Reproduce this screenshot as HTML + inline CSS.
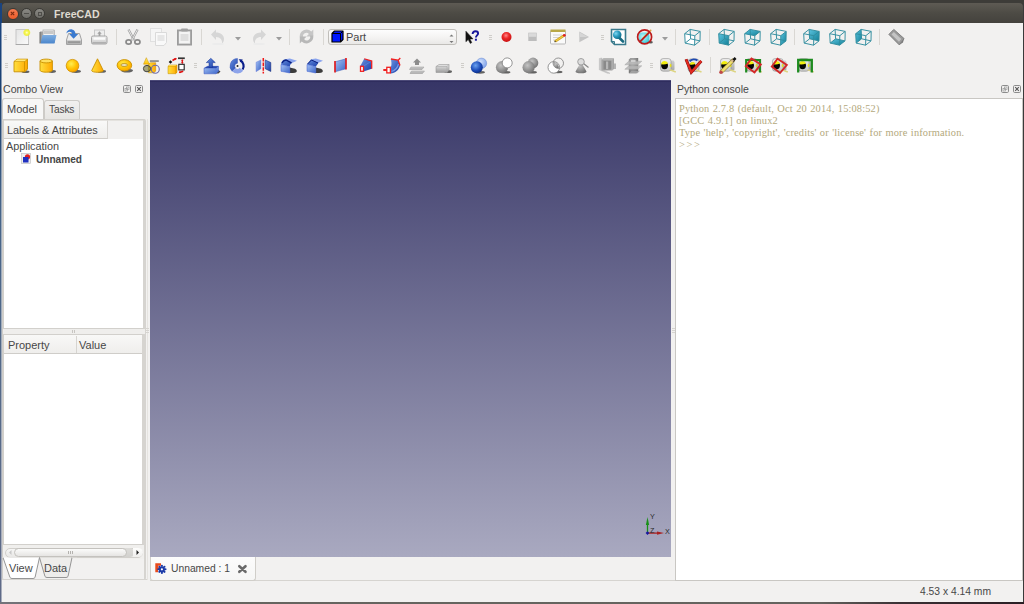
<!DOCTYPE html>
<html><head><meta charset="utf-8">
<style>
*{margin:0;padding:0;box-sizing:border-box}
html,body{width:1024px;height:604px;overflow:hidden;background:#3c3b37;font-family:"Liberation Sans",sans-serif;font-size:11px;color:#474747}
.a{position:absolute;display:block}
svg{overflow:visible}
.t{position:absolute;white-space:nowrap;line-height:1}
</style></head><body>

<svg width="0" height="0" style="position:absolute"><defs>
<linearGradient id="gPage" x1="0" y1="0" x2="1" y2="1"><stop offset="0" stop-color="#e4e4e4"/><stop offset="1" stop-color="#fafafa"/></linearGradient>
<radialGradient id="gGlow"><stop offset="0" stop-color="#ffffe0"/><stop offset="0.35" stop-color="#f8f85a"/><stop offset="0.7" stop-color="#eeee30" stop-opacity="0.9"/><stop offset="1" stop-color="#eeee30" stop-opacity="0"/></radialGradient>
<linearGradient id="gBlueF" x1="0" y1="0" x2="0" y2="1"><stop offset="0" stop-color="#80aee0"/><stop offset="1" stop-color="#4a86cc"/></linearGradient>
<linearGradient id="gGrayV" x1="0" y1="0" x2="0" y2="1"><stop offset="0" stop-color="#f0f0f0"/><stop offset="1" stop-color="#c8c8c8"/></linearGradient>
<linearGradient id="gGrayD" x1="0" y1="0" x2="0" y2="1"><stop offset="0" stop-color="#d0d0d0"/><stop offset="1" stop-color="#a8a8a8"/></linearGradient>
<radialGradient id="gRed" cx="0.45" cy="0.35" r="0.65"><stop offset="0" stop-color="#ff8a8a"/><stop offset="0.45" stop-color="#ec2a2a"/><stop offset="1" stop-color="#c81010"/></radialGradient>
<linearGradient id="gTeal" x1="0" y1="0" x2="1" y2="1"><stop offset="0" stop-color="#5cc4e0"/><stop offset="1" stop-color="#137f96"/></linearGradient>
<radialGradient id="gTealS" cx="0.35" cy="0.35" r="0.7"><stop offset="0" stop-color="#7fd6f0"/><stop offset="0.5" stop-color="#2a9cc0"/><stop offset="1" stop-color="#0c6a88"/></radialGradient>
<radialGradient id="gCyan" cx="0.4" cy="0.4" r="0.7"><stop offset="0" stop-color="#bff4f8"/><stop offset="1" stop-color="#30c8d8"/></radialGradient>
<linearGradient id="gYel" x1="0" y1="0" x2="1" y2="0"><stop offset="0" stop-color="#ffe040"/><stop offset="1" stop-color="#ffa800"/></linearGradient>
<linearGradient id="gYelV" x1="0" y1="0" x2="0" y2="1"><stop offset="0" stop-color="#fff070"/><stop offset="1" stop-color="#ffc000"/></linearGradient>
<radialGradient id="gYelS" cx="0.4" cy="0.35" r="0.7"><stop offset="0" stop-color="#ffee50"/><stop offset="0.6" stop-color="#ffc000"/><stop offset="1" stop-color="#ffa000"/></radialGradient>
<linearGradient id="gBlu" x1="0" y1="0" x2="1" y2="1"><stop offset="0" stop-color="#a8c4f4"/><stop offset="1" stop-color="#3a64c8"/></linearGradient>
<linearGradient id="gBluD" x1="0" y1="0" x2="1" y2="1"><stop offset="0" stop-color="#6a92e0"/><stop offset="1" stop-color="#1a3ea8"/></linearGradient>
<radialGradient id="gBluS" cx="0.4" cy="0.35" r="0.7"><stop offset="0" stop-color="#6aa2f0"/><stop offset="0.6" stop-color="#1c4cb8"/><stop offset="1" stop-color="#0a2a80"/></radialGradient>
<radialGradient id="gBluL" cx="0.4" cy="0.35" r="0.7"><stop offset="0" stop-color="#d0e0fc"/><stop offset="1" stop-color="#7a9ee8"/></radialGradient>
<radialGradient id="gGrayS" cx="0.4" cy="0.35" r="0.75"><stop offset="0" stop-color="#c4c4c4"/><stop offset="1" stop-color="#6a6a6a"/></radialGradient>
<linearGradient id="gGrayB" x1="0" y1="0" x2="0" y2="1"><stop offset="0" stop-color="#e8e8e8"/><stop offset="1" stop-color="#9c9c9c"/></linearGradient>
<linearGradient id="gView3d" x1="0" y1="0" x2="0" y2="1"><stop offset="0" stop-color="#363566"/><stop offset="1" stop-color="#a9a9c0"/></linearGradient>
</defs></svg>

<div class="a" style="left:0px;top:0px;width:1024px;height:3px;background:#3d3c38"></div>
<div class="a" style="left:0px;top:602px;width:1024px;height:2px;background:linear-gradient(90deg,#74737a,#66655f 12%,#64635e 80%,#3a3034 88%,#2a1e24)"></div>
<div class="a" style="left:0px;top:3px;width:1px;height:599px;background:linear-gradient(#1a4480,#1a4070 17%,#466488 33%,#566a88 66%,#5f6a88)"></div>
<div class="a" style="left:1px;top:3px;width:1px;height:20px;background:#1a4480"></div>
<div class="a" style="left:1px;top:23px;width:1px;height:579px;background:#f2f1f0"></div>
<div class="a" style="left:1px;top:23px;width:1px;height:579px;opacity:0.5;background:linear-gradient(#1a4480,#1a4070 17%,#466488 33%,#566a88 66%,#5f6a88)"></div>
<div class="a" style="left:1023px;top:3px;width:1px;height:599px;background:#3a3a3a"></div>
<div class="a" style="left:2px;top:23px;width:1021px;height:579px;background:#f2f1f0"></div>
<div class="a" style="left:2px;top:3px;width:1021px;height:20px;border-radius:4px 4px 0 0;background:linear-gradient(#5e5b54,#4d4b45 50%,#44423d)"></div>
<div class="a" style="left:6.5px;top:7.5px;width:12px;height:12px;border-radius:50%;border:0.6px solid #3a3935;background:linear-gradient(#f47c52,#ec5c2a)"></div>
<svg class="a" style="left:10px;top:11px" width="5" height="5" viewBox="0 0 5 5" ><path d="M0.8 0.8L4.2 4.2M4.2 0.8L0.8 4.2" stroke="#7a2a10" stroke-width="1.1"/></svg>
<div class="a" style="left:20.5px;top:8px;width:11px;height:11px;border-radius:50%;border:0.6px solid #3a3935;background:linear-gradient(#8a8984,#6e6d68)"></div>
<div class="a" style="left:23.5px;top:13px;width:5px;height:1.2px;background:#4f4e4a"></div>
<div class="a" style="left:34.2px;top:8px;width:11px;height:11px;border-radius:50%;border:0.6px solid #3a3935;background:linear-gradient(#8a8984,#6e6d68)"></div>
<div class="a" style="left:37.7px;top:11.5px;width:4px;height:4px;border:1px solid #4f4e4a"></div>
<div class="t" style="left:54px;top:8.5px;font-weight:bold;font-size:10.6px;color:#dfdad0;letter-spacing:0.05px">FreeCAD</div>
<div class="a" style="left:4px;top:35px;width:3px;height:1px;background:#cfcdc9"></div>
<div class="a" style="left:4px;top:37px;width:3px;height:1px;background:#cfcdc9"></div>
<div class="a" style="left:4px;top:39px;width:3px;height:1px;background:#cfcdc9"></div>
<svg class="a" style="left:15px;top:29px" width="16" height="16" viewBox="0 0 16 16" ><rect x="1" y="0.5" width="12.5" height="15" fill="url(#gPage)" stroke="#c6c6c6"/><rect x="0.8" y="15" width="13" height="1" fill="#a8a8a8"/><circle cx="11.8" cy="3.6" r="4" fill="url(#gGlow)"/></svg>
<svg class="a" style="left:39px;top:29px" width="18" height="16" viewBox="0 0 18 16" ><path d="M1 2.5H6L7 1H15.5V14H1Z" fill="#9d9d9d"/><rect x="4" y="1" width="11" height="8" fill="#f2f2f2" stroke="#b0b0b0" stroke-width="0.8"/><rect x="4.5" y="2" width="10" height="3" fill="#c8c8c8"/><path d="M1.6 14.5L3.4 6H17.5L15.5 14.5Z" fill="url(#gBlueF)"/><path d="M1 3V14.5" stroke="#6a6a6a" stroke-width="1"/></svg>
<svg class="a" style="left:66px;top:29px" width="16" height="16" viewBox="0 0 16 16" ><path d="M2.5 4.5H13.5L15.5 11V15.5H0.5V11Z" fill="#ececec" stroke="#a2a2a2"/><rect x="1" y="11.5" width="14" height="3.5" fill="#b4b4b4"/><rect x="2" y="12.5" width="12" height="1.2" fill="#8c8c8c"/><path d="M0.3 5C0.5 1.5 3.5 0 6 0.4C8.2 0.8 9.4 2.6 9.6 5H12.2L7.6 9.8L3.2 5H6.2C5.8 3.6 4.8 2.8 3.6 2.8C2 2.8 0.8 3.8 0.3 5Z" fill="#3a7ad0"/></svg>
<svg class="a" style="left:91px;top:29px" width="17" height="16" viewBox="0 0 17 16" ><rect x="3.5" y="1" width="10" height="6.5" fill="#ededed" stroke="#c8c8c8"/><path d="M8.5 2.2L6.3 4.8H7.6V7H9.4V4.8H10.7Z" fill="#a0a0a0"/><rect x="0.5" y="7" width="15.5" height="8" rx="1.5" fill="url(#gGrayV)" stroke="#a6a6a6"/><rect x="2.5" y="8.5" width="11.5" height="2.2" fill="#fbfbfb"/><rect x="1.5" y="13" width="13.5" height="1.5" fill="#b0b0b0"/></svg>
<div class="a" style="left:116px;top:29px;width:1px;height:16px;background:#d9d7d3"></div>
<svg class="a" style="left:125px;top:29px" width="16" height="16" viewBox="0 0 16 16" ><path d="M3.5 0.5L9 11" stroke="#9a9a9a" stroke-width="2.2"/><path d="M3.5 0.5L9 11" stroke="#e8e8e8" stroke-width="1"/><path d="M12.5 0.5L7 11" stroke="#9a9a9a" stroke-width="2.2"/><path d="M12.5 0.5L7 11" stroke="#e8e8e8" stroke-width="1"/><ellipse cx="3.6" cy="13" rx="2.6" ry="2.1" fill="none" stroke="#8a8a8a" stroke-width="1.7"/><ellipse cx="12.4" cy="13" rx="2.6" ry="2.1" fill="none" stroke="#8a8a8a" stroke-width="1.7"/></svg>
<svg class="a" style="left:150px;top:28px" width="18" height="18" viewBox="0 0 18 18" ><rect x="0.5" y="0.5" width="11" height="13" fill="#f5f5f5" stroke="#e0e0e0"/><path d="M5.5 4.5H16.5V14.5L14 17.5H5.5Z" fill="#f9f9f9" stroke="#dadada"/><rect x="7.5" y="7" width="7" height="6" fill="#e6e6e6"/></svg>
<svg class="a" style="left:176px;top:28px" width="17" height="18" viewBox="0 0 17 18" ><rect x="1.9" y="2.4" width="13.2" height="14.2" fill="#ececec" stroke="#9c9c9c" stroke-width="1.8"/><rect x="3.5" y="4" width="10" height="11" fill="#f4f4f4"/><rect x="4.5" y="6" width="8" height="7" fill="#dedede"/><rect x="5" y="0.5" width="7" height="3" rx="1" fill="#a0a0a0"/></svg>
<div class="a" style="left:201px;top:29px;width:1px;height:16px;background:#d9d7d3"></div>
<svg class="a" style="left:210px;top:29px" width="16" height="16" viewBox="0 0 16 16" ><path d="M1 5.5L6 0.5V3.5C10.5 3.5 14 6 14 10C14 12 13 13.5 12 14.5C12.5 11 10.5 8 6 8V11Z" fill="#d6d6d6"/><ellipse cx="8" cy="15" rx="6" ry="1" fill="#ececec"/></svg>
<svg class="a" style="left:235px;top:36.5px" width="6" height="4" viewBox="0 0 6 4" ><path d="M0 0H6L3 3.5Z" fill="#9c9c9c"/></svg>
<svg class="a" style="left:251px;top:29px" width="16" height="16" viewBox="0 0 16 16" ><path d="M15 5.5L10 0.5V3.5C5.5 3.5 2 6 2 10C2 12 3 13.5 4 14.5C3.5 11 5.5 8 10 8V11Z" fill="#d6d6d6"/><ellipse cx="8" cy="15" rx="6" ry="1" fill="#ececec"/></svg>
<svg class="a" style="left:276px;top:36.5px" width="6" height="4" viewBox="0 0 6 4" ><path d="M0 0H6L3 3.5Z" fill="#9c9c9c"/></svg>
<div class="a" style="left:289px;top:29px;width:1px;height:16px;background:#d9d7d3"></div>
<svg class="a" style="left:299px;top:29px" width="16" height="16" viewBox="0 0 16 16" ><path d="M0.8 8.2A6.8 6.8 0 0 1 12.3 2.6L14.3 0.6V7.6H7.4L9.9 5.1A3.3 3.3 0 0 0 4.2 8.2Z" fill="#c6c6c6"/><path d="M14.2 6.6A6.8 6.8 0 0 1 2.7 12.4L0.8 14.4V7.4H7.6L5.1 9.9A3.3 3.3 0 0 0 10.8 6.6Z" fill="#b8b8b8"/></svg>
<div class="a" style="left:323px;top:29px;width:1px;height:16px;background:#d9d7d3"></div>
<div class="a" style="left:328px;top:28.5px;width:129px;height:16px;border:1px solid #c0beba;border-radius:3px;background:linear-gradient(#fdfdfd,#f3f2f1 60%,#e9e8e6)"></div>
<svg class="a" style="left:331px;top:30px" width="13" height="13" viewBox="0 0 13 13" ><path d="M1 3.5L3.5 1H12V9.5L9.5 12H1Z" fill="#0018ff" stroke="#000" stroke-width="1.2" stroke-linejoin="round"/><path d="M1 3.5H9.5V12M9.5 3.5L12 1" fill="none" stroke="#000" stroke-width="1"/></svg>
<div class="t" style="left:346px;top:32px;font-size:11px">Part</div>
<svg class="a" style="left:448.5px;top:33.5px" width="5" height="10" viewBox="0 0 5 10" ><path d="M0.5 2.5L2.5 0.5L4.5 2.5Z" fill="#777"/><path d="M0.5 7L2.5 9L4.5 7Z" fill="#777"/></svg>
<svg class="a" style="left:465px;top:30px" width="14" height="14" viewBox="0 0 14 14" ><path d="M0.9 1.2V11.8L3.2 9.6L5.3 13.4L6.8 12.6L4.9 8.9H8Z" fill="#111" stroke="#111" stroke-width="0.5" stroke-linejoin="round"/><path d="M7.6 3.9C7.6 2.1 8.8 1.2 10.5 1.2C12.2 1.2 13.1 2.2 13.1 3.5C13.1 5.3 10.9 5.5 10.9 7.6" fill="none" stroke="#16169a" stroke-width="1.9"/><rect x="9.9" y="8.7" width="2" height="2" fill="#16169a"/></svg>
<div class="a" style="left:489px;top:35px;width:3px;height:1px;background:#cfcdc9"></div>
<div class="a" style="left:489px;top:37px;width:3px;height:1px;background:#cfcdc9"></div>
<div class="a" style="left:489px;top:39px;width:3px;height:1px;background:#cfcdc9"></div>
<svg class="a" style="left:500px;top:31px" width="13" height="12" viewBox="0 0 13 12" ><circle cx="6.5" cy="6" r="5" fill="url(#gRed)"/></svg>
<svg class="a" style="left:528px;top:32px" width="9" height="10" viewBox="0 0 9 10" ><rect x="0.3" y="0.7" width="8.4" height="8.3" fill="#bdbdbd"/><rect x="0.8" y="1.2" width="7.4" height="3.6" fill="#dadada"/></svg>
<svg class="a" style="left:550px;top:29px" width="16" height="16" viewBox="0 0 16 16" ><rect x="0.5" y="1.5" width="15" height="13.5" rx="1" fill="#fafafa" stroke="#b8b8b8"/><rect x="0.5" y="0.5" width="15" height="2.5" fill="#b8a848"/><path d="M3 6H12M3 8.5H9M3 11H7" stroke="#c8c8c8" stroke-width="0.8"/><path d="M5 12.5L14 6.5" stroke="#c89820" stroke-width="2.6"/><path d="M5 12.5L14 6.5" stroke="#f0d040" stroke-width="1.2"/><circle cx="14.3" cy="6.3" r="1.4" fill="#e02020"/><path d="M4 13.3L5.2 11.6L6 12.8Z" fill="#333"/></svg>
<svg class="a" style="left:579px;top:31px" width="11" height="12" viewBox="0 0 11 12" ><path d="M0.3 0.6L10 6L0.3 11.3Z" fill="#c4c4c4"/><path d="M0.8 1.5L8.8 6H0.8Z" fill="#d6d6d6"/></svg>
<div class="a" style="left:601px;top:35px;width:3px;height:1px;background:#cfcdc9"></div>
<div class="a" style="left:601px;top:37px;width:3px;height:1px;background:#cfcdc9"></div>
<div class="a" style="left:601px;top:39px;width:3px;height:1px;background:#cfcdc9"></div>
<svg class="a" style="left:610px;top:28px" width="17" height="18" viewBox="0 0 17 18" ><path d="M1.5 1.5H15.5V16.5H4.5L1.5 13.5Z" fill="#fff" stroke="#3a7a8c" stroke-width="1.6"/><path d="M1.5 13.5H4.5V16.5" fill="none" stroke="#3a7a8c" stroke-width="1"/><path d="M9 9.5L13 13.5" stroke="#1a6a80" stroke-width="2.6" stroke-linecap="round"/><circle cx="7.2" cy="6.8" r="4.3" fill="url(#gTealS)"/></svg>
<svg class="a" style="left:636px;top:29px" width="17" height="17" viewBox="0 0 17 17" ><ellipse cx="14.6" cy="13.3" rx="2.2" ry="1.2" fill="#333" opacity="0.8"/><rect x="2.8" y="3.6" width="10.6" height="10.6" rx="3.5" fill="url(#gCyan)"/><path d="M6.8 9.3L14.3 1.8" stroke="#f2e040" stroke-width="1.3"/><circle cx="14.6" cy="1.4" r="0.9" fill="#e0a040"/><circle cx="8.6" cy="7.9" r="7" fill="none" stroke="#bc1c1c" stroke-width="1.7"/><path d="M3.9 12.8L13.5 3.2" stroke="#bc1c1c" stroke-width="1.8"/></svg>
<svg class="a" style="left:662px;top:36.5px" width="6" height="4" viewBox="0 0 6 4" ><path d="M0 0H6L3 3.5Z" fill="#9c9c9c"/></svg>
<div class="a" style="left:675px;top:29px;width:1px;height:16px;background:#d9d7d3"></div>
<svg class="a" style="left:684px;top:29px" width="17" height="17" viewBox="0 0 17 17" ><path d="M0.70 4.70L10.80 6.70L10.60 16.20L1.20 14.10Z" fill="#fff"/><path d="M0.70 4.70L10.80 6.70M6.10 0.40L16.20 2.40M10.80 6.70L10.60 16.20M16.20 2.40L16.00 11.90M10.60 16.20L1.20 14.10M16.00 11.90L6.60 9.80M1.20 14.10L0.70 4.70M6.60 9.80L6.10 0.40M0.70 4.70L6.10 0.40M10.80 6.70L16.20 2.40M10.60 16.20L16.00 11.90M1.20 14.10L6.60 9.80" fill="none" stroke="#2f8c9e" stroke-width="0.95" stroke-linejoin="round"/></svg>
<div class="a" style="left:709px;top:29px;width:1px;height:16px;background:#d9d7d3"></div>
<svg class="a" style="left:718px;top:29px" width="17" height="17" viewBox="0 0 17 17" ><path d="M0.70 4.70L10.80 6.70L10.60 16.20L1.20 14.10Z" fill="url(#gTeal)"/><path d="M0.70 4.70L10.80 6.70M6.10 0.40L16.20 2.40M10.80 6.70L10.60 16.20M16.20 2.40L16.00 11.90M10.60 16.20L1.20 14.10M16.00 11.90L6.60 9.80M1.20 14.10L0.70 4.70M6.60 9.80L6.10 0.40M0.70 4.70L6.10 0.40M10.80 6.70L16.20 2.40M10.60 16.20L16.00 11.90M1.20 14.10L6.60 9.80" fill="none" stroke="#2f8c9e" stroke-width="0.95" stroke-linejoin="round"/></svg>
<svg class="a" style="left:744px;top:29px" width="17" height="17" viewBox="0 0 17 17" ><path d="M0.70 4.70L10.80 6.70L16.20 2.40L6.10 0.40Z" fill="url(#gTeal)"/><path d="M0.70 4.70L10.80 6.70M6.10 0.40L16.20 2.40M10.80 6.70L10.60 16.20M16.20 2.40L16.00 11.90M10.60 16.20L1.20 14.10M16.00 11.90L6.60 9.80M1.20 14.10L0.70 4.70M6.60 9.80L6.10 0.40M0.70 4.70L6.10 0.40M10.80 6.70L16.20 2.40M10.60 16.20L16.00 11.90M1.20 14.10L6.60 9.80" fill="none" stroke="#2f8c9e" stroke-width="0.95" stroke-linejoin="round"/></svg>
<svg class="a" style="left:770px;top:29px" width="17" height="17" viewBox="0 0 17 17" ><path d="M10.80 6.70L16.20 2.40L16.00 11.90L10.60 16.20Z" fill="url(#gTeal)"/><path d="M0.70 4.70L10.80 6.70M6.10 0.40L16.20 2.40M10.80 6.70L10.60 16.20M16.20 2.40L16.00 11.90M10.60 16.20L1.20 14.10M16.00 11.90L6.60 9.80M1.20 14.10L0.70 4.70M6.60 9.80L6.10 0.40M0.70 4.70L6.10 0.40M10.80 6.70L16.20 2.40M10.60 16.20L16.00 11.90M1.20 14.10L6.60 9.80" fill="none" stroke="#2f8c9e" stroke-width="0.95" stroke-linejoin="round"/></svg>
<div class="a" style="left:794px;top:29px;width:1px;height:16px;background:#d9d7d3"></div>
<svg class="a" style="left:803px;top:29px" width="17" height="17" viewBox="0 0 17 17" ><path d="M6.10 0.40L16.20 2.40L16.00 11.90L6.60 9.80Z" fill="url(#gTeal)"/><path d="M0.70 4.70L10.80 6.70M6.10 0.40L16.20 2.40M10.80 6.70L10.60 16.20M16.20 2.40L16.00 11.90M10.60 16.20L1.20 14.10M16.00 11.90L6.60 9.80M1.20 14.10L0.70 4.70M6.60 9.80L6.10 0.40M0.70 4.70L6.10 0.40M10.80 6.70L16.20 2.40M10.60 16.20L16.00 11.90M1.20 14.10L6.60 9.80" fill="none" stroke="#2f8c9e" stroke-width="0.95" stroke-linejoin="round"/></svg>
<svg class="a" style="left:829px;top:29px" width="17" height="17" viewBox="0 0 17 17" ><path d="M1.20 14.10L10.60 16.20L16.00 11.90L6.60 9.80Z" fill="url(#gTeal)"/><path d="M0.70 4.70L10.80 6.70M6.10 0.40L16.20 2.40M10.80 6.70L10.60 16.20M16.20 2.40L16.00 11.90M10.60 16.20L1.20 14.10M16.00 11.90L6.60 9.80M1.20 14.10L0.70 4.70M6.60 9.80L6.10 0.40M0.70 4.70L6.10 0.40M10.80 6.70L16.20 2.40M10.60 16.20L16.00 11.90M1.20 14.10L6.60 9.80" fill="none" stroke="#2f8c9e" stroke-width="0.95" stroke-linejoin="round"/></svg>
<svg class="a" style="left:855px;top:29px" width="17" height="17" viewBox="0 0 17 17" ><path d="M0.70 4.70L6.10 0.40L6.60 9.80L1.20 14.10Z" fill="url(#gTeal)"/><path d="M0.70 4.70L10.80 6.70M6.10 0.40L16.20 2.40M10.80 6.70L10.60 16.20M16.20 2.40L16.00 11.90M10.60 16.20L1.20 14.10M16.00 11.90L6.60 9.80M1.20 14.10L0.70 4.70M6.60 9.80L6.10 0.40M0.70 4.70L6.10 0.40M10.80 6.70L16.20 2.40M10.60 16.20L16.00 11.90M1.20 14.10L6.60 9.80" fill="none" stroke="#2f8c9e" stroke-width="0.95" stroke-linejoin="round"/></svg>
<div class="a" style="left:879px;top:29px;width:1px;height:16px;background:#d9d7d3"></div>
<svg class="a" style="left:888px;top:29px" width="17" height="17" viewBox="0 0 17 17" ><path d="M5.8 0.4L0.9 5.4L11.3 15.9L16.1 9.6Z" fill="#9a9a9a" stroke="#7a7a7a" stroke-width="0.9" stroke-linejoin="round"/><path d="M5.8 3L3.5 5.5L11 12.8L13.3 10Z" fill="#c4c4c4"/><path d="M11.3 15.9L16.1 9.6L15 13.5Z" fill="#777"/></svg>
<div class="a" style="left:5px;top:63px;width:3px;height:1px;background:#cfcdc9"></div>
<div class="a" style="left:5px;top:65px;width:3px;height:1px;background:#cfcdc9"></div>
<div class="a" style="left:5px;top:67px;width:3px;height:1px;background:#cfcdc9"></div>
<svg class="a" style="left:13px;top:58px" width="18" height="16" viewBox="0 0 18 16" ><ellipse cx="12.5" cy="13.8" rx="4" ry="1.3" fill="#333" opacity="0.75"/><path d="M1 3.5L4 1.2H14.5V11L12 13.8H1Z" fill="url(#gYel)" stroke="#c89000" stroke-width="0.9" stroke-linejoin="round"/><path d="M1 3.5H11.5V13.8M11.5 3.5L14.5 1.2" fill="none" stroke="#c89000" stroke-width="0.8"/><path d="M1.5 3.3L4.2 1.6H14L11.4 3.3Z" fill="#ffe878"/></svg>
<svg class="a" style="left:39px;top:58px" width="18" height="16" viewBox="0 0 18 16" ><ellipse cx="13" cy="13.5" rx="4" ry="1.4" fill="#333" opacity="0.75"/><path d="M1 3V12.3A6.2 1.9 0 0 0 13.4 12.3V3Z" fill="url(#gYel)" stroke="#c89000" stroke-width="0.9"/><ellipse cx="7.2" cy="3" rx="6.2" ry="1.9" fill="#ffe060" stroke="#c89000" stroke-width="0.9"/></svg>
<svg class="a" style="left:65px;top:58px" width="18" height="16" viewBox="0 0 18 16" ><ellipse cx="11" cy="13.3" rx="5" ry="1.6" fill="#333" opacity="0.75"/><circle cx="7.5" cy="7.7" r="6.3" fill="url(#gYelS)" stroke="#d09000" stroke-width="0.8"/></svg>
<svg class="a" style="left:90px;top:58px" width="18" height="16" viewBox="0 0 18 16" ><ellipse cx="11.5" cy="13.3" rx="4.5" ry="1.5" fill="#333" opacity="0.75"/><path d="M7.5 0.8L13.3 12.6A5.8 1.7 0 0 1 1.7 12.6Z" fill="url(#gYel)" stroke="#c89000" stroke-width="0.9" stroke-linejoin="round"/></svg>
<svg class="a" style="left:116px;top:58px" width="18" height="16" viewBox="0 0 18 16" ><ellipse cx="11" cy="12.6" rx="6" ry="1.9" fill="#333" opacity="0.75"/><ellipse cx="8.4" cy="7.3" rx="7.3" ry="5.7" fill="url(#gYelS)" stroke="#c89000" stroke-width="0.9"/><ellipse cx="8.2" cy="7" rx="3.3" ry="1.5" fill="#e8e0c0" stroke="#b08000" stroke-width="0.7"/></svg>
<svg class="a" style="left:142px;top:58px" width="18" height="17" viewBox="0 0 18 17" ><rect x="7.8" y="2.4" width="9" height="1.3" fill="#6a6a6a"/><path d="M6.4 6.2L8.5 4.7H13.7V13L12 14.8H6.4Z" fill="url(#gYel)" stroke="#c08800" stroke-width="0.5"/><path d="M4.3 -0.3L7.5 6.2H1.5Z" fill="url(#gYelV)" stroke="#c89000" stroke-width="0.5"/><ellipse cx="5" cy="10.6" rx="3.6" ry="3.2" fill="#6a6a20" fill-opacity="0.55" stroke="#444" stroke-width="1"/><circle cx="13.3" cy="11.2" r="4" fill="none" stroke="#6c6cae" stroke-width="1.1"/></svg>
<svg class="a" style="left:167px;top:58px" width="19" height="17" viewBox="0 0 19 17" ><path d="M3.5 2.3L5.3 4L3.5 5.8L1.7 4Z" fill="#111"/><path d="M5.5 2.5L8.8 0.5" stroke="#e01010" stroke-width="1.6"/><path d="M9.8 0L7.2 0.2L8.8 2.3Z" fill="#e01010"/><rect x="11" y="-0.6" width="6.8" height="1.7" fill="#333"/><path d="M15.3 2V5" stroke="#e01010" stroke-width="1.3"/><path d="M13.9 2.6L15.3 1.2L16.7 2.6ZM13.9 4.5L15.3 5.9L16.7 4.5Z" fill="#e01010"/><rect x="11.8" y="6.3" width="5.4" height="5.6" fill="#fff" stroke="#222" stroke-width="1.1"/><path d="M12.5 14.6L16.2 13.3" stroke="#e01010" stroke-width="1.6"/><path d="M11.8 15L13 12.6L13.8 14.8Z" fill="#e01010"/><path d="M1 8.3L2.6 7H10V14.3L8.6 15.7H1Z" fill="url(#gYel)" stroke="#c08800" stroke-width="0.5"/><path d="M1.2 8.3H8.6V15.6M8.6 8.3L10 7" fill="none" stroke="#d09800" stroke-width="0.5"/><path d="M1.3 8.1L2.7 7.2H9.6L8.4 8.1Z" fill="#ffe060"/></svg>
<div class="a" style="left:194px;top:63px;width:3px;height:1px;background:#cfcdc9"></div>
<div class="a" style="left:194px;top:65px;width:3px;height:1px;background:#cfcdc9"></div>
<div class="a" style="left:194px;top:67px;width:3px;height:1px;background:#cfcdc9"></div>
<svg class="a" style="left:203px;top:58px" width="18" height="16" viewBox="0 0 18 16" ><path d="M15.5 12L17.5 13.5L15.5 15.5H13Z" fill="#444"/><path d="M1 10.2L4.5 8.3H15.5V13.3L13 15.8H1Z" fill="url(#gBlu)" stroke="#3a56c0" stroke-width="0.5"/><path d="M1 10.2L4.5 8.3H15.5L13 10.2Z" fill="#2848b0"/><path d="M13 10.2V15.8" stroke="#5a78d8" stroke-width="0.6"/><path d="M7.8 0.3L12.3 4.6H9.6V9.3H6V4.6H3.3Z" fill="url(#gBluD)" stroke="#0c2a90" stroke-width="0.5"/></svg>
<svg class="a" style="left:229px;top:58px" width="17" height="16" viewBox="0 0 17 16" ><path d="M8.5 0.5A7.5 7.5 0 0 0 3.2 13.3L6.52 9.98A2.8 2.8 0 0 1 8.5 5.2Z" fill="url(#gBluD)" stroke="#2a46b0" stroke-width="0.4"/><path d="M3.2 13.3A7.5 7.5 0 0 0 14.25 12.82L10.64 9.8A2.8 2.8 0 0 1 6.52 9.98Z" fill="#8ea4ea"/><path d="M11.2 2.6A6.1 6.1 0 0 1 13.6 11.5" fill="none" stroke="#0a1e8a" stroke-width="2.2"/><path d="M9.6 1.2L13.8 1.4L12 4.2Z" fill="#0a1e8a"/><circle cx="8.5" cy="8" r="1" fill="#222"/></svg>
<svg class="a" style="left:255px;top:58px" width="17" height="16" viewBox="0 0 17 16" ><path d="M1 4.3L5.9 1.9V10.7L1 13.7Z" fill="url(#gBlu)" stroke="#6a78d8" stroke-width="0.4"/><path d="M10.2 1.9L15.8 4.5V13.5L10.2 10.7Z" fill="url(#gBluD)" stroke="#0a1e70" stroke-width="0.5"/><path d="M8.3 0V15.5" stroke="#f01818" stroke-width="1.5" stroke-dasharray="3.6 1"/></svg>
<svg class="a" style="left:280px;top:58px" width="18" height="16" viewBox="0 0 18 16" ><path d="M9.5 9.5L15 10.8Q17.5 12 16.5 14Q15.5 15 13 15L9.5 15Z" fill="#3c3c3c"/><path d="M5 1.2L9.8 0.5L17 2.8L12.5 4.8Z" fill="#8aa4ee"/><path d="M1 6.5C1 3.5 3 1.6 5 1.2L12.5 4.8C11 5.5 10 6.5 9.8 8.5L1 6.5Z" fill="url(#gBluD)"/><path d="M2 4.8C3 3 4.5 2.2 6 2L11.5 4.8" fill="none" stroke="#0a1e80" stroke-width="1.4"/><path d="M1 6.5L9.8 8.5V15L1 13.3Z" fill="url(#gBlu)" stroke="#3a5ad0" stroke-width="0.5"/></svg>
<svg class="a" style="left:306px;top:58px" width="18" height="16" viewBox="0 0 18 16" ><path d="M9.5 9.5L15 10.8Q17.5 12 16.5 14Q15.5 15 13 15L9.5 15Z" fill="#3c3c3c"/><path d="M5 1.2L9.8 0.5L17 2.8L12.5 4.8Z" fill="#8aa4ee"/><path d="M1 6.5L5 1.2L12.5 4.8L9.8 8.5Z" fill="url(#gBluD)"/><path d="M1.5 6L5.5 2L12 5" fill="none" stroke="#0a1e80" stroke-width="1"/><path d="M1 6.5L9.8 8.5V15L1 13.3Z" fill="url(#gBlu)" stroke="#3a5ad0" stroke-width="0.5"/></svg>
<svg class="a" style="left:333px;top:58px" width="15" height="16" viewBox="0 0 15 16" ><path d="M2 3.8L13 0.8V10.8L2 13.8Z" fill="url(#gBlu)" stroke="#3a5ab8" stroke-width="0.5"/><path d="M2 3V14.5M13 0V11.5" stroke="#e81818" stroke-width="1.6"/></svg>
<svg class="a" style="left:359px;top:58px" width="15" height="16" viewBox="0 0 15 16" ><path d="M5.2 0.75L12.7 3.1V10.8L4.5 13.5L1.3 8Z" fill="url(#gBluD)"/><path d="M4.5 8L12.7 3.1M4.5 13.5L4.5 8" stroke="#6a90e8" stroke-width="0.5"/><path d="M5.2 0.75L12.7 3.1V10.8" fill="none" stroke="#f02020" stroke-width="1.3"/><rect x="1.5" y="8.3" width="3" height="5" fill="#fff" stroke="#f02020" stroke-width="1.3"/></svg>
<svg class="a" style="left:383px;top:58px" width="18" height="16" viewBox="0 0 18 16" ><path d="M7.9 1L15.2 2.2L17 7.5C16 12 12.5 15 7.5 15.5V9C9 8 8.5 4 7.9 1Z" fill="url(#gBluD)"/><path d="M8.5 13.5C12 12.5 14.5 10 15.5 6" fill="none" stroke="#8aa8f0" stroke-width="1.2" opacity="0.8"/><path d="M7.9 1L15.2 2.2M15.2 2.2L17.3 0M15.2 2.2L17 7.5" fill="none" stroke="#f02020" stroke-width="1.3"/><rect x="3.8" y="9.3" width="3.6" height="5.6" fill="#fff" stroke="#f02020" stroke-width="1.3"/><path d="M0.3 12H4" stroke="#f02020" stroke-width="2"/></svg>
<svg class="a" style="left:409px;top:58px" width="17" height="16" viewBox="0 0 17 16" ><path d="M8 0.5L12 4.5H10V7H6V4.5H4Z" fill="#8c8c8c"/><path d="M2 9H15L13 11.5H0.5Z" fill="url(#gGrayD)" stroke="#999" stroke-width="0.5"/><path d="M2.5 13H15.5L13.5 15.5H1Z" fill="url(#gGrayD)" stroke="#999" stroke-width="0.5"/></svg>
<svg class="a" style="left:435px;top:58px" width="18" height="16" viewBox="0 0 18 16" ><ellipse cx="13" cy="13.5" rx="4" ry="1.5" fill="#333" opacity="0.75"/><path d="M1 8.5L4 6.5H14V12L12 14.5H1Z" fill="url(#gGrayB)" stroke="#999" stroke-width="0.6"/><path d="M1 8.5H12V14.5M12 8.5L14 6.5" fill="none" stroke="#aaa" stroke-width="0.6"/></svg>
<div class="a" style="left:461px;top:63px;width:3px;height:1px;background:#cfcdc9"></div>
<div class="a" style="left:461px;top:65px;width:3px;height:1px;background:#cfcdc9"></div>
<div class="a" style="left:461px;top:67px;width:3px;height:1px;background:#cfcdc9"></div>
<svg class="a" style="left:470px;top:58px" width="18" height="16" viewBox="0 0 18 16" ><ellipse cx="10" cy="14.3" rx="5" ry="1.4" fill="#333" opacity="0.75"/><circle cx="11.5" cy="5.3" r="5.2" fill="url(#gBluL)" stroke="#6a8ad0" stroke-width="0.5"/><circle cx="6.8" cy="9.3" r="6" fill="url(#gBluS)"/></svg>
<svg class="a" style="left:495px;top:58px" width="18" height="16" viewBox="0 0 18 16" ><ellipse cx="10.5" cy="14.3" rx="5" ry="1.3" fill="#333" opacity="0.75"/><circle cx="7" cy="9.2" r="6.1" fill="url(#gGrayS)"/><circle cx="12.2" cy="4.9" r="5" fill="#fff" stroke="#888" stroke-width="0.9"/></svg>
<svg class="a" style="left:521px;top:58px" width="18" height="16" viewBox="0 0 18 16" ><ellipse cx="11" cy="14.3" rx="5" ry="1.3" fill="#333" opacity="0.75"/><circle cx="12" cy="4.9" r="5.3" fill="url(#gGrayS)"/><circle cx="7.6" cy="9.2" r="6.1" fill="url(#gGrayS)"/></svg>
<svg class="a" style="left:547px;top:58px" width="18" height="16" viewBox="0 0 18 16" ><ellipse cx="11" cy="14" rx="4.5" ry="1.2" fill="#333" opacity="0.75"/><circle cx="6.8" cy="9.4" r="5.8" fill="#fff" stroke="#888" stroke-width="0.9"/><circle cx="11.3" cy="5.2" r="5.2" fill="none" stroke="#888" stroke-width="0.9"/><path d="M6.5 3.8A5.8 5.8 0 0 1 11.8 10.3A5.2 5.2 0 0 1 6.5 3.8Z" fill="url(#gGrayS)"/></svg>
<svg class="a" style="left:573px;top:58px" width="18" height="16" viewBox="0 0 18 16" ><path d="M8 4L13.5 13.5A5.5 1.8 0 0 1 2.5 13.5Z" fill="url(#gGrayS)"/><path d="M10.5 5.5L15.5 9.5" stroke="#888" stroke-width="1.2"/><circle cx="8" cy="3.8" r="3.3" fill="#ddd" stroke="#999" stroke-width="0.9"/></svg>
<svg class="a" style="left:599px;top:58px" width="18" height="16" viewBox="0 0 18 16" ><path d="M0.3 0.5L3 0V11.5L11 15.3H8.5L0.3 11.8Z" fill="#c8c8c8" stroke="#b0b0b0" stroke-width="0.4"/><path d="M2.5 1.5L4.5 0.3H15V11L13 12.5H2.5Z" fill="#a4a4a4"/><rect x="4.5" y="3" width="8" height="8.5" fill="#8a8a8a"/><rect x="7" y="3.5" width="2.2" height="7.5" fill="#b8b8b8"/><rect x="15" y="5.5" width="2" height="5.5" fill="#b4b4b4"/><path d="M2.5 1.5H13V12.5M13 1.5L15 0.3" fill="none" stroke="#c4c4c4" stroke-width="0.5"/></svg>
<svg class="a" style="left:624px;top:58px" width="18" height="16" viewBox="0 0 18 16" ><path d="M4.8 1.5L6.5 0H14.2V14L12.5 15.3H4.8Z" fill="url(#gGrayS)"/><path d="M0.8 6.8L4.8 3.2H17.8L13.8 6.8Z" fill="#b8b8b8" fill-opacity="0.85" stroke="#999" stroke-width="0.4"/><path d="M0.8 11.3L4.8 7.8H17.8L13.8 11.3Z" fill="#b8b8b8" fill-opacity="0.85" stroke="#999" stroke-width="0.4"/><path d="M5 15.3L7.5 12.8H16L13.5 15.3Z" fill="#aaa" fill-opacity="0.8"/><rect x="7" y="2" width="4.5" height="2" fill="#d0d0d0"/></svg>
<div class="a" style="left:650px;top:63px;width:3px;height:1px;background:#cfcdc9"></div>
<div class="a" style="left:650px;top:65px;width:3px;height:1px;background:#cfcdc9"></div>
<div class="a" style="left:650px;top:67px;width:3px;height:1px;background:#cfcdc9"></div>
<svg class="a" style="left:659px;top:58px" width="18" height="16" viewBox="0 0 18 16" ><path d="M10 2.5H14.5L15.5 4V11.5L14.5 12.5H10Z" fill="url(#gGrayD)"/><rect x="1.5" y="0.6" width="10.5" height="12.6" rx="2.6" fill="url(#gGrayV)" stroke="#8c8c8c" stroke-width="0.6"/><ellipse cx="5.6" cy="7.6" rx="3.4" ry="3.7" fill="#050505"/><path d="M2.2 6.3Q2.6 3.2 5.6 3.1Q8.6 3.2 9 5.6Q5.6 6.8 2.2 6.3Z" fill="#f2ee10"/><ellipse cx="11.6" cy="7.5" rx="0.9" ry="1.7" fill="#e8e020"/><path d="M10.5 11.6L16.8 14" stroke="#ddd480" stroke-width="1.5"/></svg>
<svg class="a" style="left:685px;top:58px" width="18" height="16" viewBox="0 0 18 16" ><rect x="3" y="1" width="11" height="12.5" rx="2.5" fill="url(#gGrayV)" stroke="#8c8c8c" stroke-width="0.6"/><ellipse cx="7.5" cy="8" rx="3" ry="3.4" fill="#050505"/><path d="M4.6 6.6Q5 4 7.5 4Q10 4 10.3 6Q7.5 7 4.6 6.6Z" fill="#f2ee10"/><path d="M10 4L12 3.5L11 6.5Z" fill="#ddd"/><path d="M4.5 3.2C6.5 1.2 10 0.8 12.5 2.5" stroke="#1e4ab0" stroke-width="2" fill="none"/><path d="M11 12L16.5 14" stroke="#ddd480" stroke-width="1.5"/><path d="M1 1.3L6.3 14.3L16.3 3" fill="none" stroke="#7a1010" stroke-width="3"/><path d="M1 1.3L6.3 14.3L16.3 3" fill="none" stroke="#e42a20" stroke-width="2"/></svg>
<div class="a" style="left:710px;top:57px;width:1px;height:16px;background:#d9d7d3"></div>
<svg class="a" style="left:719px;top:58px" width="18" height="16" viewBox="0 0 18 16" ><path d="M10 2.5H14.5L15.5 4V11.5L14.5 12.5H10Z" fill="url(#gGrayD)"/><rect x="1.5" y="0.6" width="10.5" height="12.6" rx="2.6" fill="url(#gGrayV)" stroke="#8c8c8c" stroke-width="0.6"/><ellipse cx="5.6" cy="7.6" rx="3.4" ry="3.7" fill="#050505"/><path d="M2.2 6.3Q2.6 3.2 5.6 3.1Q8.6 3.2 9 5.6Q5.6 6.8 2.2 6.3Z" fill="#f2ee10"/><ellipse cx="11.6" cy="7.5" rx="0.9" ry="1.7" fill="#e8e020"/><path d="M10.5 11.6L16.8 14" stroke="#ddd480" stroke-width="1.5"/><path d="M2 14.2L14.8 1.6" stroke="#8a7a30" stroke-width="3.8"/><path d="M2 14.2L14.8 1.6" stroke="#f0e070" stroke-width="2.6"/><path d="M13.2 3.2L16.6 0" stroke="#111" stroke-width="2.6"/><path d="M12.5 3.6L14.2 2" stroke="#d8b890" stroke-width="2.2"/><circle cx="2" cy="14.2" r="1.8" fill="#c04848"/></svg>
<svg class="a" style="left:745px;top:58px" width="18" height="16" viewBox="0 0 18 16" ><path d="M10 2.5H14.5L15.5 4V11.5L14.5 12.5H10Z" fill="url(#gGrayD)"/><rect x="1.5" y="0.6" width="10.5" height="12.6" rx="2.6" fill="url(#gGrayV)" stroke="#8c8c8c" stroke-width="0.6"/><ellipse cx="5.6" cy="7.6" rx="3.4" ry="3.7" fill="#050505"/><path d="M2.2 6.3Q2.6 3.2 5.6 3.1Q8.6 3.2 9 5.6Q5.6 6.8 2.2 6.3Z" fill="#f2ee10"/><ellipse cx="11.6" cy="7.5" rx="0.9" ry="1.7" fill="#e8e020"/><path d="M10.5 11.6L16.8 14" stroke="#ddd480" stroke-width="1.5"/><path d="M1.2 14.5V2H15V14.5" fill="none" stroke="#1e8c20" stroke-width="2.2"/><path d="M0.8 8L6.5 0.6L15.8 6.5L9.5 14.4Z" fill="none" stroke="#d42828" stroke-width="1.9"/></svg>
<svg class="a" style="left:771px;top:58px" width="18" height="16" viewBox="0 0 18 16" ><path d="M10 2.5H14.5L15.5 4V11.5L14.5 12.5H10Z" fill="url(#gGrayD)"/><rect x="1.5" y="0.6" width="10.5" height="12.6" rx="2.6" fill="url(#gGrayV)" stroke="#8c8c8c" stroke-width="0.6"/><ellipse cx="5.6" cy="7.6" rx="3.4" ry="3.7" fill="#050505"/><path d="M2.2 6.3Q2.6 3.2 5.6 3.1Q8.6 3.2 9 5.6Q5.6 6.8 2.2 6.3Z" fill="#f2ee10"/><ellipse cx="11.6" cy="7.5" rx="0.9" ry="1.7" fill="#e8e020"/><path d="M10.5 11.6L16.8 14" stroke="#ddd480" stroke-width="1.5"/><path d="M0.8 8.5L6.5 0.8L15.8 7L9 15Z" fill="none" stroke="#d42828" stroke-width="1.9"/></svg>
<svg class="a" style="left:797px;top:58px" width="18" height="16" viewBox="0 0 18 16" ><path d="M10 2.5H14.5L15.5 4V11.5L14.5 12.5H10Z" fill="url(#gGrayD)"/><rect x="1.5" y="0.6" width="10.5" height="12.6" rx="2.6" fill="url(#gGrayV)" stroke="#8c8c8c" stroke-width="0.6"/><ellipse cx="5.6" cy="7.6" rx="3.4" ry="3.7" fill="#050505"/><path d="M2.2 6.3Q2.6 3.2 5.6 3.1Q8.6 3.2 9 5.6Q5.6 6.8 2.2 6.3Z" fill="#f2ee10"/><ellipse cx="11.6" cy="7.5" rx="0.9" ry="1.7" fill="#e8e020"/><path d="M10.5 11.6L16.8 14" stroke="#ddd480" stroke-width="1.5"/><path d="M1.2 14.5V2H14.8V14.5" fill="none" stroke="#1e8c20" stroke-width="2.3"/></svg>
<div class="a" style="left:150px;top:80px;width:521px;height:477px;background:linear-gradient(#363566,#a9a9c0)"></div>
<div class="a" style="left:150px;top:80px;width:521px;height:1px;background:#4c4a78"></div>
<div class="a" style="left:150px;top:81px;width:521px;height:1px;background:#2f2d5e"></div>
<svg class="a" style="left:640px;top:508px" width="36" height="30" viewBox="0 0 36 30" ><path d="M7.5 25.1V15" stroke="#189018" stroke-width="1.3"/><path d="M5.9 17L7.5 9L9.1 17Z" fill="#189018"/><path d="M7.5 25.1H18" stroke="#a82020" stroke-width="1.3"/><path d="M17 23.5L24 25.1L17 26.7Z" fill="#a82020"/><path d="M5.6 25.1L7.5 23.2L9.4 25.1L7.5 27Z" fill="#1818a0"/><text x="10" y="10.5" font-family="Liberation Sans" font-size="7.2" fill="#2a2a2a">Y</text><text x="10" y="25" font-family="Liberation Sans" font-size="7.2" fill="#2a2a2a">Z</text><text x="25" y="25.5" font-family="Liberation Sans" font-size="7.2" fill="#2a2a2a">X</text></svg>
<div class="t" style="left:3px;top:84px;font-size:10.6px">Combo View</div>
<svg class="a" style="left:123px;top:85px" width="8" height="8" viewBox="0 0 8 8" ><rect x="0.5" y="0.5" width="7" height="7" rx="1.2" fill="none" stroke="#8c8c8c"/><rect x="2" y="3.5" width="2.5" height="2.5" fill="none" stroke="#9a9a9a" stroke-width="0.7"/><rect x="3.5" y="2" width="2.5" height="2.5" fill="none" stroke="#9a9a9a" stroke-width="0.7"/></svg>
<svg class="a" style="left:135px;top:85px" width="8" height="8" viewBox="0 0 8 8" ><rect x="0.5" y="0.5" width="7" height="7" rx="1.2" fill="none" stroke="#8c8c8c"/><path d="M2.2 2.2L5.8 5.8M5.8 2.2L2.2 5.8" stroke="#555" stroke-width="1.1"/></svg>
<div class="a" style="left:2px;top:118.5px;width:144px;height:461.5px;border:1px solid #cfcdc9;border-right:2px solid #d6d4d0;border-radius:2px;background:#f2f1f0"></div>
<div class="a" style="left:44px;top:100px;width:36px;height:19.5px;border:1px solid #cdcbc7;border-bottom:none;border-radius:3px 3px 0 0;background:linear-gradient(#f1f0ef,#e6e5e2)"></div>
<div class="a" style="left:2px;top:98px;width:42px;height:22px;border:1px solid #cdcbc7;border-bottom:none;border-radius:3px 3px 0 0;background:#f7f7f6"></div>
<div class="t" style="left:7px;top:104px;">Model</div>
<div class="t" style="left:49px;top:105px;font-size:10.2px;letter-spacing:-0.15px">Tasks</div>
<div class="a" style="left:3px;top:119px;width:142px;height:210px;border:1px solid #d2d0cc;border-right:2px solid #d6d4d0;background:#fff"></div>
<div class="a" style="left:4px;top:120px;width:104px;height:19px;border-top:1px solid #e4e2de;border-right:1px solid #d6d4d0;border-bottom:1px solid #cfcdc9;background:linear-gradient(#f9f9f8,#efeeec)"></div>
<div class="a" style="left:108px;top:120px;width:35px;height:19px;border-top:1px solid #e4e2de;background:#f2f1f0"></div>
<div class="t" style="left:7px;top:125px;font-size:10.9px">Labels &amp; Attributes</div>
<div class="t" style="left:6px;top:141px;font-size:10.85px">Application</div>
<svg class="a" style="left:21px;top:153px" width="10" height="11" viewBox="0 0 10 11" ><rect x="0.5" y="0.5" width="9" height="10" fill="#eee" stroke="#bbb" stroke-width="0.6"/><circle cx="6.5" cy="3.8" r="2.6" fill="#e02020"/><rect x="2" y="4" width="5.5" height="5.5" fill="#2030c0"/></svg>
<div class="t" style="left:36px;top:155px;font-weight:bold;font-size:10.1px">Unnamed</div>
<div class="a" style="left:3px;top:329px;width:142px;height:5px;background:#efeeec"></div>
<div class="a" style="left:72px;top:330px;width:1px;height:3px;background:#c8c6c2"></div>
<div class="a" style="left:74px;top:330px;width:1px;height:3px;background:#c8c6c2"></div>
<div class="a" style="left:3px;top:334px;width:141px;height:211px;border:1px solid #d2d0cc;border-right:2px solid #d6d4d0;background:#fff"></div>
<div class="a" style="left:4px;top:335px;width:138px;height:19px;border-bottom:1px solid #cfcdc9;background:linear-gradient(#f8f8f7,#efeeec)"></div>
<div class="a" style="left:76px;top:336px;width:1px;height:17px;background:#d6d4d0"></div>
<div class="t" style="left:8px;top:340px;font-size:11px">Property</div>
<div class="t" style="left:79px;top:340px;font-size:11px">Value</div>
<div class="a" style="left:3px;top:545px;width:141px;height:14px;background:#f0efed"></div>
<div class="a" style="left:5px;top:547.5px;width:138px;height:10px;border:1px solid #d2d0cc;border-radius:5px;background:linear-gradient(#f6f6f5,#e8e7e5)"></div>
<div class="a" style="left:120px;top:548px;width:14px;height:9px;border-radius:4.5px;background:linear-gradient(#dddcd9,#d2d1ce)"></div>
<div class="a" style="left:133px;top:548px;width:9.5px;height:9px;border-radius:0 4.5px 4.5px 0;background:linear-gradient(#fdfdfc,#f0efed)"></div>
<div class="a" style="left:13.5px;top:548px;width:113px;height:9px;border:1px solid #c4c2be;border-radius:4.5px;background:linear-gradient(#fbfbfa,#e6e5e3)"></div>
<div class="a" style="left:68px;top:551px;width:1px;height:3px;background:#b4b2ae"></div>
<div class="a" style="left:70px;top:551px;width:1px;height:3px;background:#b4b2ae"></div>
<div class="a" style="left:72px;top:551px;width:1px;height:3px;background:#b4b2ae"></div>
<svg class="a" style="left:8px;top:549px" width="5" height="7" viewBox="0 0 5 7" ><path d="M3.5 1L1 3.5L3.5 6Z" fill="#c8c8c8"/></svg>
<svg class="a" style="left:135px;top:549px" width="5" height="7" viewBox="0 0 5 7" ><path d="M1.5 1L4 3.5L1.5 6Z" fill="#222"/></svg>
<svg class="a" style="left:2px;top:556px" width="75" height="24" viewBox="0 0 75 24" ><path d="M1 1.5L8 21.5Q8.8 22.5 10 22.5H31Q32.2 22.5 33 21.5L37.5 1.5" fill="#fff" stroke="#8a8a8a" stroke-width="0.9"/><path d="M37.5 1.5L43 20.5Q43.8 21.5 45 21.5H64Q65.2 21.5 66 20.5L70 1.5" fill="#eeedeb" stroke="#8a8a8a" stroke-width="0.9"/><path d="M0 1.5H1M70 1.5H75" stroke="#d8d6d2"/></svg>
<div class="t" style="left:9px;top:563px;font-size:11px">View</div>
<div class="t" style="left:44px;top:563px;font-size:11px">Data</div>
<div class="a" style="left:2px;top:579px;width:145px;height:1px;background:#d6d4d0"></div>
<div class="a" style="left:147px;top:119px;width:1px;height:461px;background:#e6e4e0"></div>
<div class="a" style="left:146px;top:328px;width:3px;height:1px;background:#d6d4d0"></div>
<div class="a" style="left:672px;top:328px;width:3px;height:1px;background:#d6d4d0"></div>
<div class="a" style="left:146px;top:330px;width:3px;height:1px;background:#d6d4d0"></div>
<div class="a" style="left:672px;top:330px;width:3px;height:1px;background:#d6d4d0"></div>
<div class="a" style="left:146px;top:332px;width:3px;height:1px;background:#d6d4d0"></div>
<div class="a" style="left:672px;top:332px;width:3px;height:1px;background:#d6d4d0"></div>
<div class="a" style="left:150px;top:557px;width:873px;height:24px;background:#f2f1f0"></div>
<div class="a" style="left:150px;top:580px;width:873px;height:1px;background:#d6d4d0"></div>
<div class="a" style="left:150px;top:557px;width:106px;height:24px;border:1px solid #d0cec9;border-top:none;border-radius:0 0 3px 3px;background:linear-gradient(#fcfcfc,#f6f6f5)"></div>
<svg class="a" style="left:155px;top:563px" width="11" height="11" viewBox="0 0 11 11" ><path d="M0.3 0.3H6V2.8H3V4.3H5.2V6.5H3V9.3H0.3Z" fill="#e84a1c"/><circle cx="10.50" cy="6.30" r="1.05" fill="#1a3aa8"/><circle cx="9.45" cy="8.85" r="1.05" fill="#1a3aa8"/><circle cx="6.90" cy="9.90" r="1.05" fill="#1a3aa8"/><circle cx="4.35" cy="8.85" r="1.05" fill="#1a3aa8"/><circle cx="3.30" cy="6.30" r="1.05" fill="#1a3aa8"/><circle cx="4.35" cy="3.75" r="1.05" fill="#1a3aa8"/><circle cx="6.90" cy="2.70" r="1.05" fill="#1a3aa8"/><circle cx="9.45" cy="3.75" r="1.05" fill="#1a3aa8"/><circle cx="6.9" cy="6.3" r="3.1" fill="#1a3aa8"/><circle cx="6.9" cy="6.3" r="1.1" fill="#fff"/></svg>
<div class="t" style="left:171px;top:564px;font-size:10.3px">Unnamed : 1</div>
<svg class="a" style="left:238px;top:565px" width="9" height="8" viewBox="0 0 9 8" ><path d="M1.3 1.2L7.5 6.8M7.5 1.2L1.3 6.8" stroke="#6a6a6a" stroke-width="2.6" stroke-linecap="round"/></svg>
<div class="t" style="left:677px;top:84px;font-size:10.5px">Python console</div>
<svg class="a" style="left:1001px;top:85px" width="8" height="8" viewBox="0 0 8 8" ><rect x="0.5" y="0.5" width="7" height="7" rx="1.2" fill="none" stroke="#8c8c8c"/><rect x="2" y="3.5" width="2.5" height="2.5" fill="none" stroke="#9a9a9a" stroke-width="0.7"/><rect x="3.5" y="2" width="2.5" height="2.5" fill="none" stroke="#9a9a9a" stroke-width="0.7"/></svg>
<svg class="a" style="left:1013px;top:85px" width="8" height="8" viewBox="0 0 8 8" ><rect x="0.5" y="0.5" width="7" height="7" rx="1.2" fill="none" stroke="#8c8c8c"/><path d="M2.2 2.2L5.8 5.8M5.8 2.2L2.2 5.8" stroke="#555" stroke-width="1.1"/></svg>
<div class="a" style="left:675px;top:98px;width:348px;height:483px;border:1px solid #c9c7c3;background:#fff"></div>
<div class="t" style="left:679px;top:102.7px;font-family:'Liberation Serif',serif;font-size:10.4px;letter-spacing:0.15px;word-spacing:0.65px;color:#b3a87c;line-height:12.2px">Python 2.7.8 (default, Oct 20 2014, 15:08:52)<br>[GCC 4.9.1] on linux2<br>Type 'help', 'copyright', 'credits' or 'license' for more information.<br><span style="letter-spacing:1.6px">&gt;&gt;&gt;</span></div>
<div class="t" style="left:920px;top:587px;font-size:10.3px">4.53 x 4.14 mm</div>
</body></html>
